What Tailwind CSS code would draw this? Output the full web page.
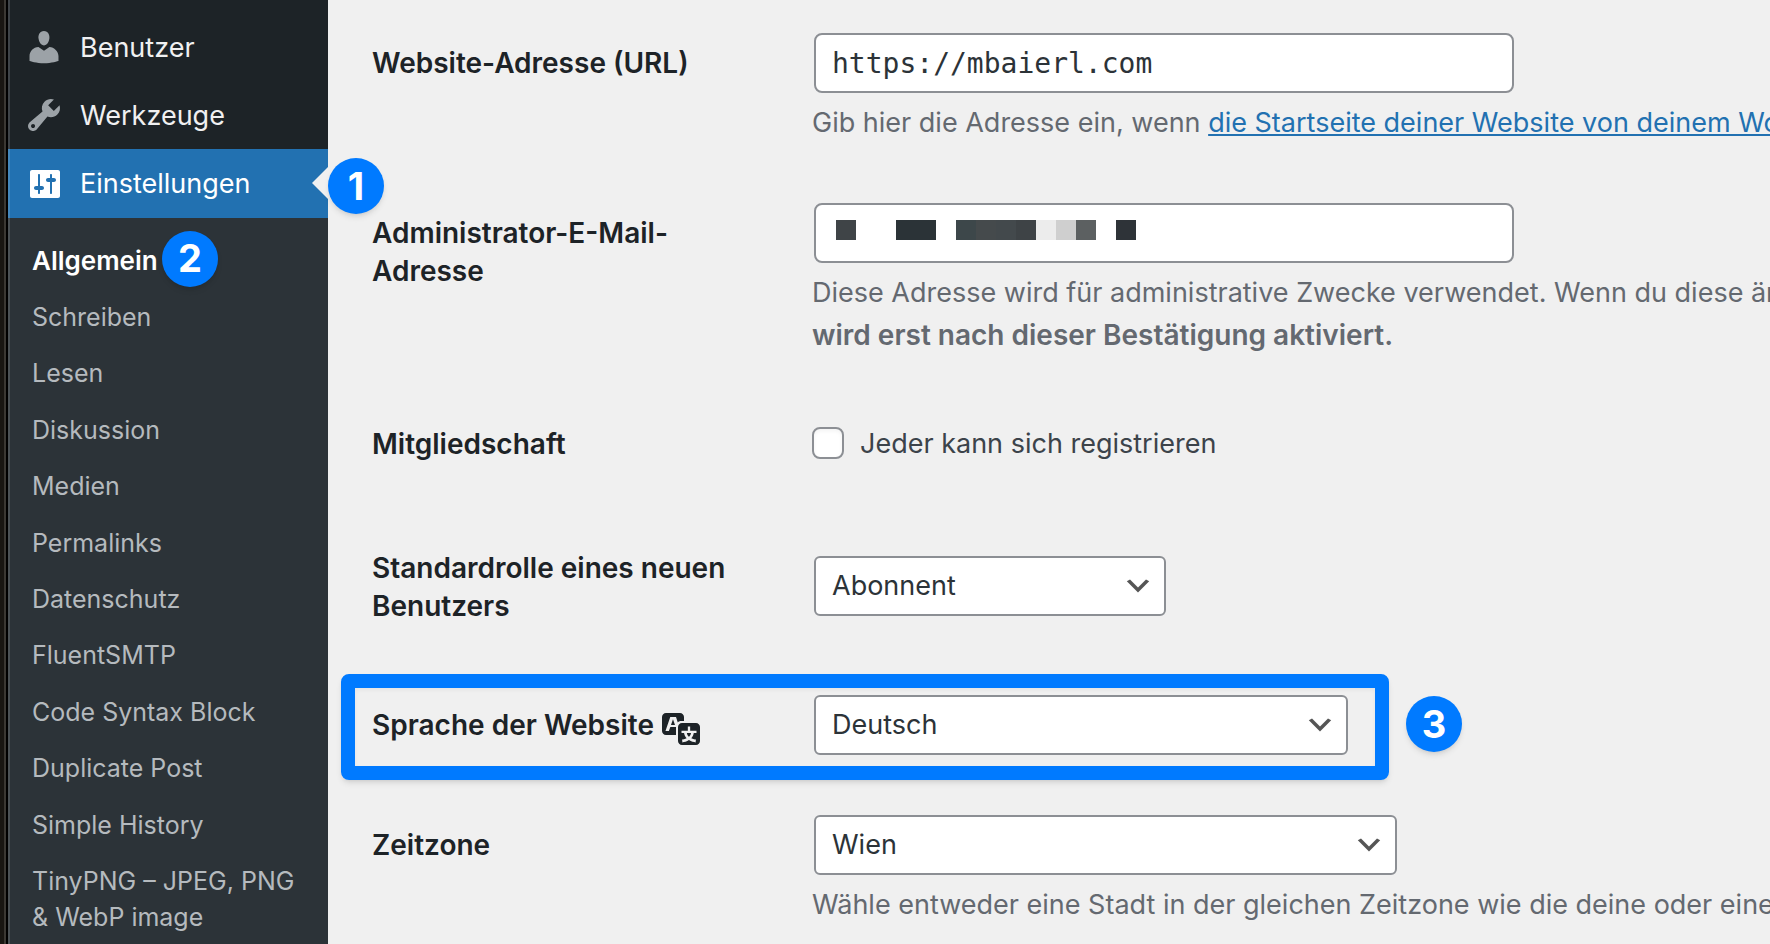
<!DOCTYPE html>
<html lang="de">
<head>
<meta charset="utf-8">
<title>Einstellungen › Allgemein</title>
<script src="https://cdn.jsdelivr.net/npm/@tailwindcss/browser@4"></script>
</head>
<body class="flex h-screen overflow-hidden bg-[#f0f0f0] font-['Inter',sans-serif] text-[27px] text-[#3c434a]">

<!-- Window edge -->
<div class="flex shrink-0" aria-hidden="true">
  <div class="w-1 bg-[#191612]"></div>
  <div class="w-[2px] bg-[#3b3833]"></div>
  <div class="w-[2px] bg-black"></div>
</div>

<nav class="relative z-10 flex w-80 shrink-0 flex-col bg-[#1d2327] pt-[13px]" aria-label="Hauptmenü">
  <a href="#" class="flex h-[68px] shrink-0 items-center gap-4 pl-4 text-[#f0f0f1]">
    <svg class="size-10 text-[#9ca2a7]" viewBox="0 0 20 20" fill="currentColor" aria-hidden="true"><path d="M10 9.25c-2.27 0-2.73-3.44-2.73-3.44C7 4.02 7.82 2 9.97 2c2.16 0 2.98 2.02 2.71 3.81 0 0-.41 3.44-2.68 3.44zm0 2.57L12.72 10c2.39 0 4.52 2.33 4.52 4.53v2.49s-3.65 1.13-7.24 1.13c-3.65 0-7.24-1.13-7.24-1.13v-2.49c0-2.25 1.94-4.48 4.47-4.48z"/></svg>
    <span class="pt-[2px]">Benutzer</span>
  </a>
  <a href="#" class="flex h-[68px] shrink-0 items-center gap-4 pl-4 text-[#f0f0f1]">
    <svg class="size-10 text-[#9ca2a7]" viewBox="0 0 20 20" fill="currentColor" aria-hidden="true"><path d="M16.68 9.77c-1.34 1.34-3.3 1.67-4.95.99l-5.41 6.52c-.99.99-2.59.99-3.58 0s-.99-2.59 0-3.57l6.52-5.42c-.68-1.65-.35-3.61.99-4.95 1.28-1.28 3.12-1.62 4.72-1.06l-2.89 2.89 2.82 2.82 2.86-2.87c.53 1.58.18 3.39-1.08 4.65zM3.81 16.21c.4.39 1.04.39 1.43 0 .4-.4.4-1.04 0-1.43-.39-.4-1.03-.4-1.43 0-.39.39-.39 1.03 0 1.43z"/></svg>
    <span class="pt-[2px]">Werkzeuge</span>
  </a>
  <a href="#" aria-current="true" class="relative flex h-[69px] shrink-0 items-center gap-4 bg-[#2271b1] pl-4 text-white">
    <svg class="size-10" viewBox="0 0 20 20" fill="currentColor" aria-hidden="true"><path d="M18 16V4c0-.55-.45-1-1-1H4c-.55 0-1 .45-1 1v12c0 .55.45 1 1 1h13c.55 0 1-.45 1-1zM8 11h1c.55 0 1 .45 1 1s-.45 1-1 1H8v1.5c0 .28-.22.5-.5.5s-.5-.22-.5-.5V13H6c-.55 0-1-.45-1-1s.45-1 1-1h1V5.5c0-.28.22-.5.5-.5s.5.22.5.5V11zm5-2h-1c-.55 0-1-.45-1-1s.45-1 1-1h1V5.5c0-.28.22-.5.5-.5s.5.22.5.5V7h1c.55 0 1 .45 1 1s-.45 1-1 1h-1v5.5c0 .28-.22.5-.5.5s-.5-.22-.5-.5V9z"/></svg>
    <span class="pt-[2px]">Einstellungen</span>
    <svg class="absolute top-[18px] right-0 h-8 w-4 text-[#f0f0f0]" viewBox="0 0 16 32" fill="currentColor" aria-hidden="true"><path d="M16 0v32L0 16z"/></svg>
    <span class="absolute top-[9px] left-80 flex size-14 items-center justify-center rounded-full bg-[#007aff] text-[38px] font-bold text-white shadow-md">1</span>
  </a>
  <ul class="grow bg-[#2c3338] py-[15px] text-[25px] leading-[1.456] text-[#b5babe]">
    <li class="relative"><a href="#" class="block px-6 py-[10px] text-[26px] leading-9 font-semibold text-white">Allgemein</a>
      <span class="absolute -top-[2px] left-[154px] flex size-14 items-center justify-center rounded-full bg-[#007aff] text-[38px] font-bold text-white shadow-md">2</span></li>
    <li><a href="#" class="block px-6 py-[10px]">Schreiben</a></li>
    <li><a href="#" class="block px-6 py-[10px]">Lesen</a></li>
    <li><a href="#" class="block px-6 py-[10px]">Diskussion</a></li>
    <li><a href="#" class="block px-6 py-[10px]">Medien</a></li>
    <li><a href="#" class="block px-6 py-[10px]">Permalinks</a></li>
    <li><a href="#" class="block px-6 py-[10px]">Datenschutz</a></li>
    <li><a href="#" class="block px-6 py-[10px]">FluentSMTP</a></li>
    <li><a href="#" class="block px-6 py-[10px]">Code Syntax Block</a></li>
    <li><a href="#" class="block px-6 py-[10px]">Duplicate Post</a></li>
    <li><a href="#" class="block px-6 py-[10px]">Simple History</a></li>
    <li><a href="#" class="block px-6 py-[10px]">TinyPNG – JPEG, PNG &amp; WebP image compression</a></li>
  </ul>
  <div class="pointer-events-none absolute inset-y-0 left-0 w-[2px] bg-white/15" aria-hidden="true"></div>
</nav>

<main class="min-w-0 grow overflow-hidden pt-[3px] pl-11">
  <table class="w-full table-fixed border-collapse text-left">
    <colgroup><col class="w-[440px]"><col></colgroup>
    <tbody>
      <tr>
        <th scope="row" class="pt-[41px] pr-5 pb-[39px] align-top text-[28px] leading-[38px] font-semibold text-[#1d2327]"><label for="home">Website-Adresse (URL)</label></th>
        <td class="pt-[30px] pb-[29px] whitespace-nowrap">
          <input id="home" type="url" value="https://mbaierl.com" class="ml-[2px] block h-[60px] w-[700px] rounded-lg border-2 border-[#8c8f94] bg-white px-4 font-['DejaVu_Sans_Mono',monospace] text-[28px] text-[#2c3338]">
          <p class="mt-[9px] leading-[42px] text-[#646970]">Gib hier die Adresse ein, wenn <a href="#" class="text-[#2271b1] underline decoration-2 underline-offset-2">die Startseite deiner Website von deinem WordPress-Installationsverzeichnis</a></p>
        </td>
      </tr>
      <tr>
        <th scope="row" class="pt-[41px] pr-5 pb-[39px] align-top text-[28px] leading-[38px] font-semibold text-[#1d2327]"><label for="email">Administrator-E-Mail-<br>Adresse</label></th>
        <td class="pt-[30px] pb-[29px] whitespace-nowrap">
          <div class="relative ml-[2px] w-[700px]">
            <input id="email" type="email" class="block h-[60px] w-full rounded-lg border-2 border-[#8c8f94] bg-white px-4 text-[#2c3338]">
            <!-- Redacted address -->
            <div class="pointer-events-none absolute top-[17px] left-[22px] flex h-5" aria-hidden="true">
              <i class="w-5 bg-[#3f4447]"></i><i class="ml-10 w-10 bg-[#2b3337]"></i><i class="ml-5 w-5 bg-[#3d474a]"></i><i class="w-5 bg-[#454a4c]"></i><i class="w-5 bg-[#43494c]"></i><i class="w-5 bg-[#3e4346]"></i><i class="w-5 bg-[#ececec]"></i><i class="w-5 bg-[#cfcfcf]"></i><i class="w-5 bg-[#5c6061]"></i><i class="ml-5 w-5 bg-[#2e3338]"></i>
            </div>
          </div>
          <p class="mt-[9px] leading-[42px] text-[#646970]">Diese Adresse wird für administrative Zwecke verwendet. Wenn du diese änderst,<br><strong class="text-[28px] font-semibold">wird erst nach dieser Bestätigung aktiviert.</strong></p>
        </td>
      </tr>
      <tr>
        <th scope="row" class="pt-[39px] pr-5 pb-[39px] align-top text-[28px] leading-[38px] font-semibold text-[#1d2327]">Mitgliedschaft</th>
        <td class="py-[30px]">
          <label class="mt-2 mb-[15px] flex items-center gap-4 leading-[38px]">
            <input type="checkbox" class="size-8 appearance-none rounded-lg border-2 border-[#8c8f94] bg-white inset-shadow-sm">
            <span class="pt-[2px] leading-9">Jeder kann sich registrieren</span>
          </label>
        </td>
      </tr>
      <tr>
        <th scope="row" class="pt-[42px] pr-5 pb-10 align-top text-[28px] leading-[38px] font-semibold text-[#1d2327]"><label for="role">Standardrolle eines neuen Benutzers</label></th>
        <td class="py-[30px] align-middle">
          <div class="relative ml-[2px] w-[352px]">
            <select id="role" class="block h-[60px] w-full appearance-none rounded-md border-2 border-[#8c8f94] bg-white px-4 pt-px text-[#2c3338]"><option>Abonnent</option></select>
            <svg class="pointer-events-none absolute top-[14px] right-3 size-8 text-[#555]" viewBox="0 0 20 20" fill="currentColor" aria-hidden="true"><path d="M5 6l5 5 5-5 2 1-7 7-7-7 2-1z"/></svg>
          </div>
        </td>
      </tr>
      <tr>
        <th scope="row" class="pt-[41px] pr-5 pb-[39px] align-top text-[28px] leading-[38px] font-semibold text-[#1d2327]"><label for="lang" class="flex h-[38px] items-center gap-2">Sprache der Website
          <svg class="mt-1 size-10 shrink-0" viewBox="0 0 20 20" fill="currentColor" aria-hidden="true"><path d="M11 7H9.49c-.63 0-1.25.3-1.59.7L7 5H4.13l-2.39 7h1.69l.74-2H7v4H2c-1.1 0-2-.9-2-2V5c0-1.1.9-2 2-2h7c1.1 0 2 .9 2 2v2zM6.51 9H4.49l1-2.93zM10 8h7c1.1 0 2 .9 2 2v7c0 1.1-.9 2-2 2h-7c-1.1 0-2-.9-2-2v-7c0-1.1.9-2 2-2zm7.25 5v-1.08h-3.17V9.75h-1.16v2.17H9.75V13h1.28c.11.85.56 1.85 1.28 2.62-.87.36-1.89.62-2.31.62-.01.02.22.97.2 1.46.84 0 2.21-.5 3.28-1.15 1.09.65 2.48 1.15 3.34 1.15-.02-.49.2-1.44.2-1.46-.43 0-1.49-.27-2.38-.63.7-.77 1.14-1.77 1.25-2.61h1.36zm-3.81 1.93c-.5-.46-.85-1.13-1.01-1.93h2.09c-.17.8-.51 1.47-1 1.93l-.04.03s-.03-.02-.04-.03z"/></svg></label></th>
        <td class="relative py-[30px]">
          <div class="relative ml-[2px] w-[534px]">
            <select id="lang" class="block h-[60px] w-full appearance-none rounded-md border-2 border-[#8c8f94] bg-white px-4 pt-px text-[#2c3338]"><option>Deutsch</option></select>
            <svg class="pointer-events-none absolute top-[14px] right-3 size-8 text-[#555]" viewBox="0 0 20 20" fill="currentColor" aria-hidden="true"><path d="M5 6l5 5 5-5 2 1-7 7-7-7 2-1z"/></svg>
          </div>
          <div class="pointer-events-none absolute top-[9px] left-[-471px] h-[106px] w-[1048px] rounded-lg border-14 border-[#007aff] shadow-md inset-shadow-sm" aria-hidden="true"></div>
          <span class="absolute top-[31px] left-[594px] flex size-14 items-center justify-center rounded-full bg-[#007aff] text-[38px] font-bold text-white shadow-md">3</span>
        </td>
      </tr>
      <tr>
        <th scope="row" class="pt-[41px] pr-5 pb-[39px] align-top text-[28px] leading-[38px] font-semibold text-[#1d2327]"><label for="tz">Zeitzone</label></th>
        <td class="pt-[30px] pb-[29px] whitespace-nowrap">
          <div class="relative ml-[2px] w-[583px]">
            <select id="tz" class="block h-[60px] w-full appearance-none rounded-md border-2 border-[#8c8f94] bg-white px-4 pt-px text-[#2c3338]"><option>Wien</option></select>
            <svg class="pointer-events-none absolute top-[14px] right-3 size-8 text-[#555]" viewBox="0 0 20 20" fill="currentColor" aria-hidden="true"><path d="M5 6l5 5 5-5 2 1-7 7-7-7 2-1z"/></svg>
          </div>
          <p class="mt-[9px] leading-[42px] text-[#646970]">Wähle entweder eine Stadt in der gleichen Zeitzone wie die deine oder einen UTC-Zeitversatz.</p>
        </td>
      </tr>
    </tbody>
  </table>
</main>
</body>
</html>
